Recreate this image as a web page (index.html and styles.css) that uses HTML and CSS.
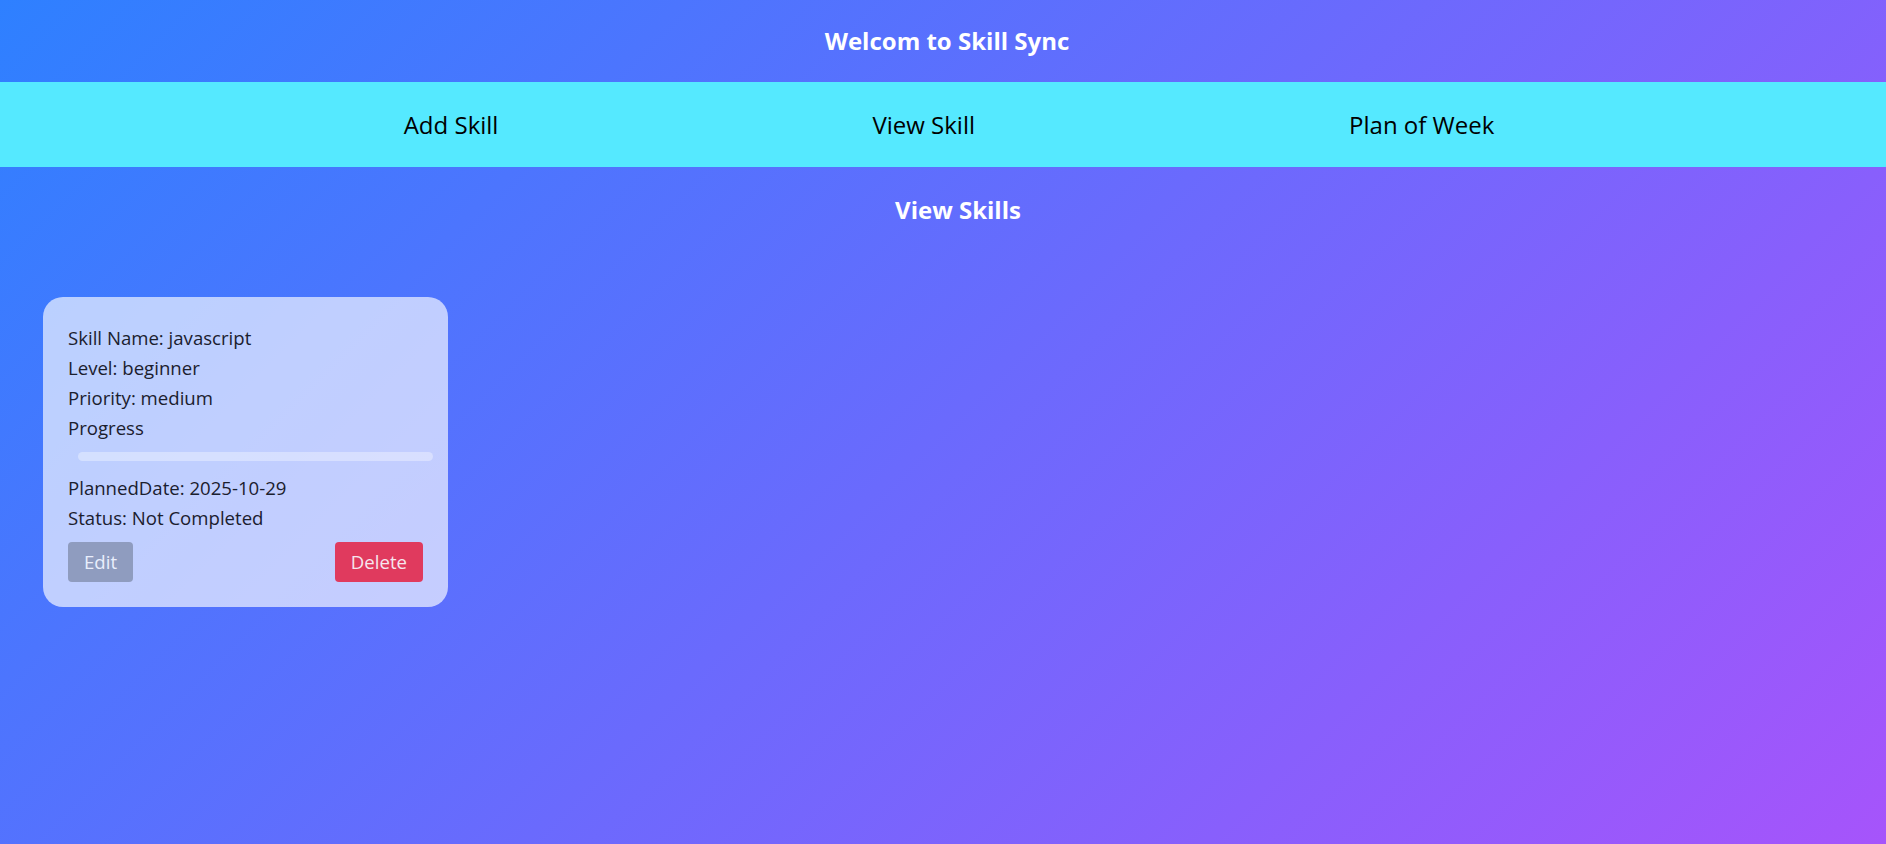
FILE: index.html
```html
<!DOCTYPE html>
<html lang="en">
<head>
<meta charset="utf-8">
<title>Skill Sync</title>
<link rel="stylesheet" href="styles.css">
</head>
<body>
<div class="app">
  <header class="topbar">
    <h1 class="title">Welcom to Skill Sync</h1>
  </header>
  <nav class="nav">
    <a class="nav-link" href="#">Add Skill</a>
    <a class="nav-link" href="#">View Skill</a>
    <a class="nav-link" href="#">Plan of Week</a>
  </nav>
  <main class="content">
    <h2 class="section-title">View Skills</h2>
    <div class="cards">
      <div class="card">
        <p class="line">Skill Name: javascript</p>
        <p class="line">Level: beginner</p>
        <p class="line">Priority: medium</p>
        <p class="line">Progress</p>
        <div class="progress"><div class="progress-fill" style="width:0%"></div></div>
        <p class="line">PlannedDate: 2025-10-29</p>
        <p class="line">Status: Not Completed</p>
        <div class="actions">
          <button class="btn btn-edit">Edit</button>
          <button class="btn btn-delete">Delete</button>
        </div>
      </div>
    </div>
  </main>
</div>
</body>
</html>
```

FILE: styles.css
```css
* { box-sizing: border-box; }
html, body { margin: 0; padding: 0; }
body {
  font-family: "Open Sans", "Noto Sans", sans-serif;
}
.app {
  min-height: 100vh;
  background: linear-gradient(135deg, #2e80ff 0%, #a654fb 100%);
  display: flex;
  flex-direction: column;
}
.topbar {
  height: 82px;
  display: flex;
  align-items: center;
  justify-content: center;
}
.title {
  margin: 0 0 0 8px;
  color: #ffffff;
  font-size: 24px;
  font-weight: 700;
  line-height: 30px;
}
.nav {
  height: 85px;
  background: #55e9ff;
  display: flex;
  align-items: center;
  justify-content: center;
  gap: 374px;
  padding-left: 12px;
}
.nav-link {
  color: #000000;
  text-decoration: none;
  font-size: 24px;
  line-height: 30px;
}
.content {
  padding: 0 0 0 43px;
}
.section-title {
  margin: 27px 13px 0 0;
  text-align: center;
  color: #ffffff;
  font-size: 24px;
  font-weight: 700;
  line-height: 32px;
}
.cards {
  margin-top: 71px;
  display: flex;
}
.card {
  width: 405px;
  padding: 26px 25px 25px 25px;
  border-radius: 20px;
  background: rgba(255, 255, 255, 0.65);
  color: #1b202e;
}
.line {
  margin: 0;
  font-size: 18.6px;
  line-height: 30px;
}
.progress {
  margin: 9px -10px 12px 10px;
  height: 9px;
  border-radius: 5px;
  background: rgba(255, 255, 255, 0.35);
  overflow: hidden;
}
.progress-fill {
  height: 100%;
  background: #3b82f6;
}
.actions {
  margin-top: 9px;
  display: flex;
  justify-content: space-between;
}
.btn {
  border: none;
  border-radius: 4px;
  font-family: inherit;
  font-size: 18.6px;
  line-height: 26px;
  padding: 7px 16px;
  cursor: pointer;
}
.btn-edit {
  background: #8f9cbf;
  color: #e9eefc;
}
.btn-delete {
  background: #e03a5e;
  color: #f6e6ee;
}
```
